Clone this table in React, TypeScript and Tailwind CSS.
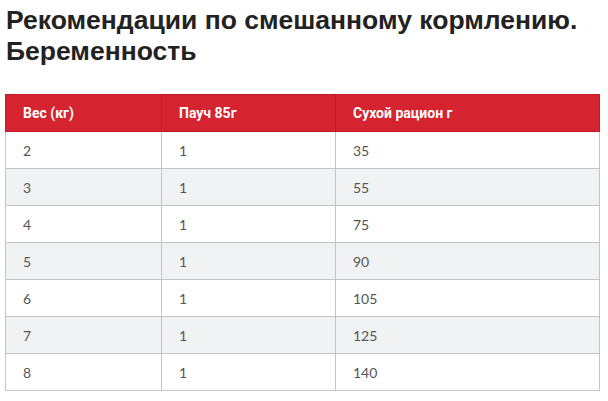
import React from "react";

const rows = [
  ["2", "1", "35"],
  ["3", "1", "55"],
  ["4", "1", "75"],
  ["5", "1", "90"],
  ["6", "1", "105"],
  ["7", "1", "125"],
  ["8", "1", "140"],
];

export default function App() {
  return (
    <div className="w-[608px] h-[401px] bg-white overflow-hidden">
      <h1 className="pl-[6px] pt-[5px] text-[26.5px] leading-[31px] font-bold text-[#222222] font-['Liberation_Sans',Arial,sans-serif]">
        Рекомендации по смешанному кормлению. Беременность
      </h1>
      <table className="ml-[5px] mt-[27px] w-[595px] border-collapse">
        <thead>
          <tr className="bg-[#d52330] h-[37px]">
            <th className="w-[156px] border border-[#c41c28] text-left pl-[17px] text-[14px] font-bold text-white font-['Roboto',sans-serif]">
              Вес (кг)
            </th>
            <th className="w-[174px] border border-[#b81a25] text-left pl-[17px] text-[14px] font-bold text-white font-['Roboto',sans-serif]">
              Пауч 85г
            </th>
            <th className="border border-[#c41c28] text-left pl-[17px] text-[14px] font-bold text-white font-['Roboto',sans-serif]">
              Сухой рацион г
            </th>
          </tr>
        </thead>
        <tbody>
          {rows.map((r, i) => (
            <tr key={i} className={`h-[37px] ${i % 2 === 1 ? "bg-[#f1f2f3]" : "bg-white"}`}>
              {r.map((c, j) => (
                <td
                  key={j}
                  className="border border-[#c4c4c4] pl-[17px] text-[14px] text-[#555555] font-['Lato',sans-serif]"
                >
                  {c}
                </td>
              ))}
            </tr>
          ))}
        </tbody>
      </table>
    </div>
  );
}
